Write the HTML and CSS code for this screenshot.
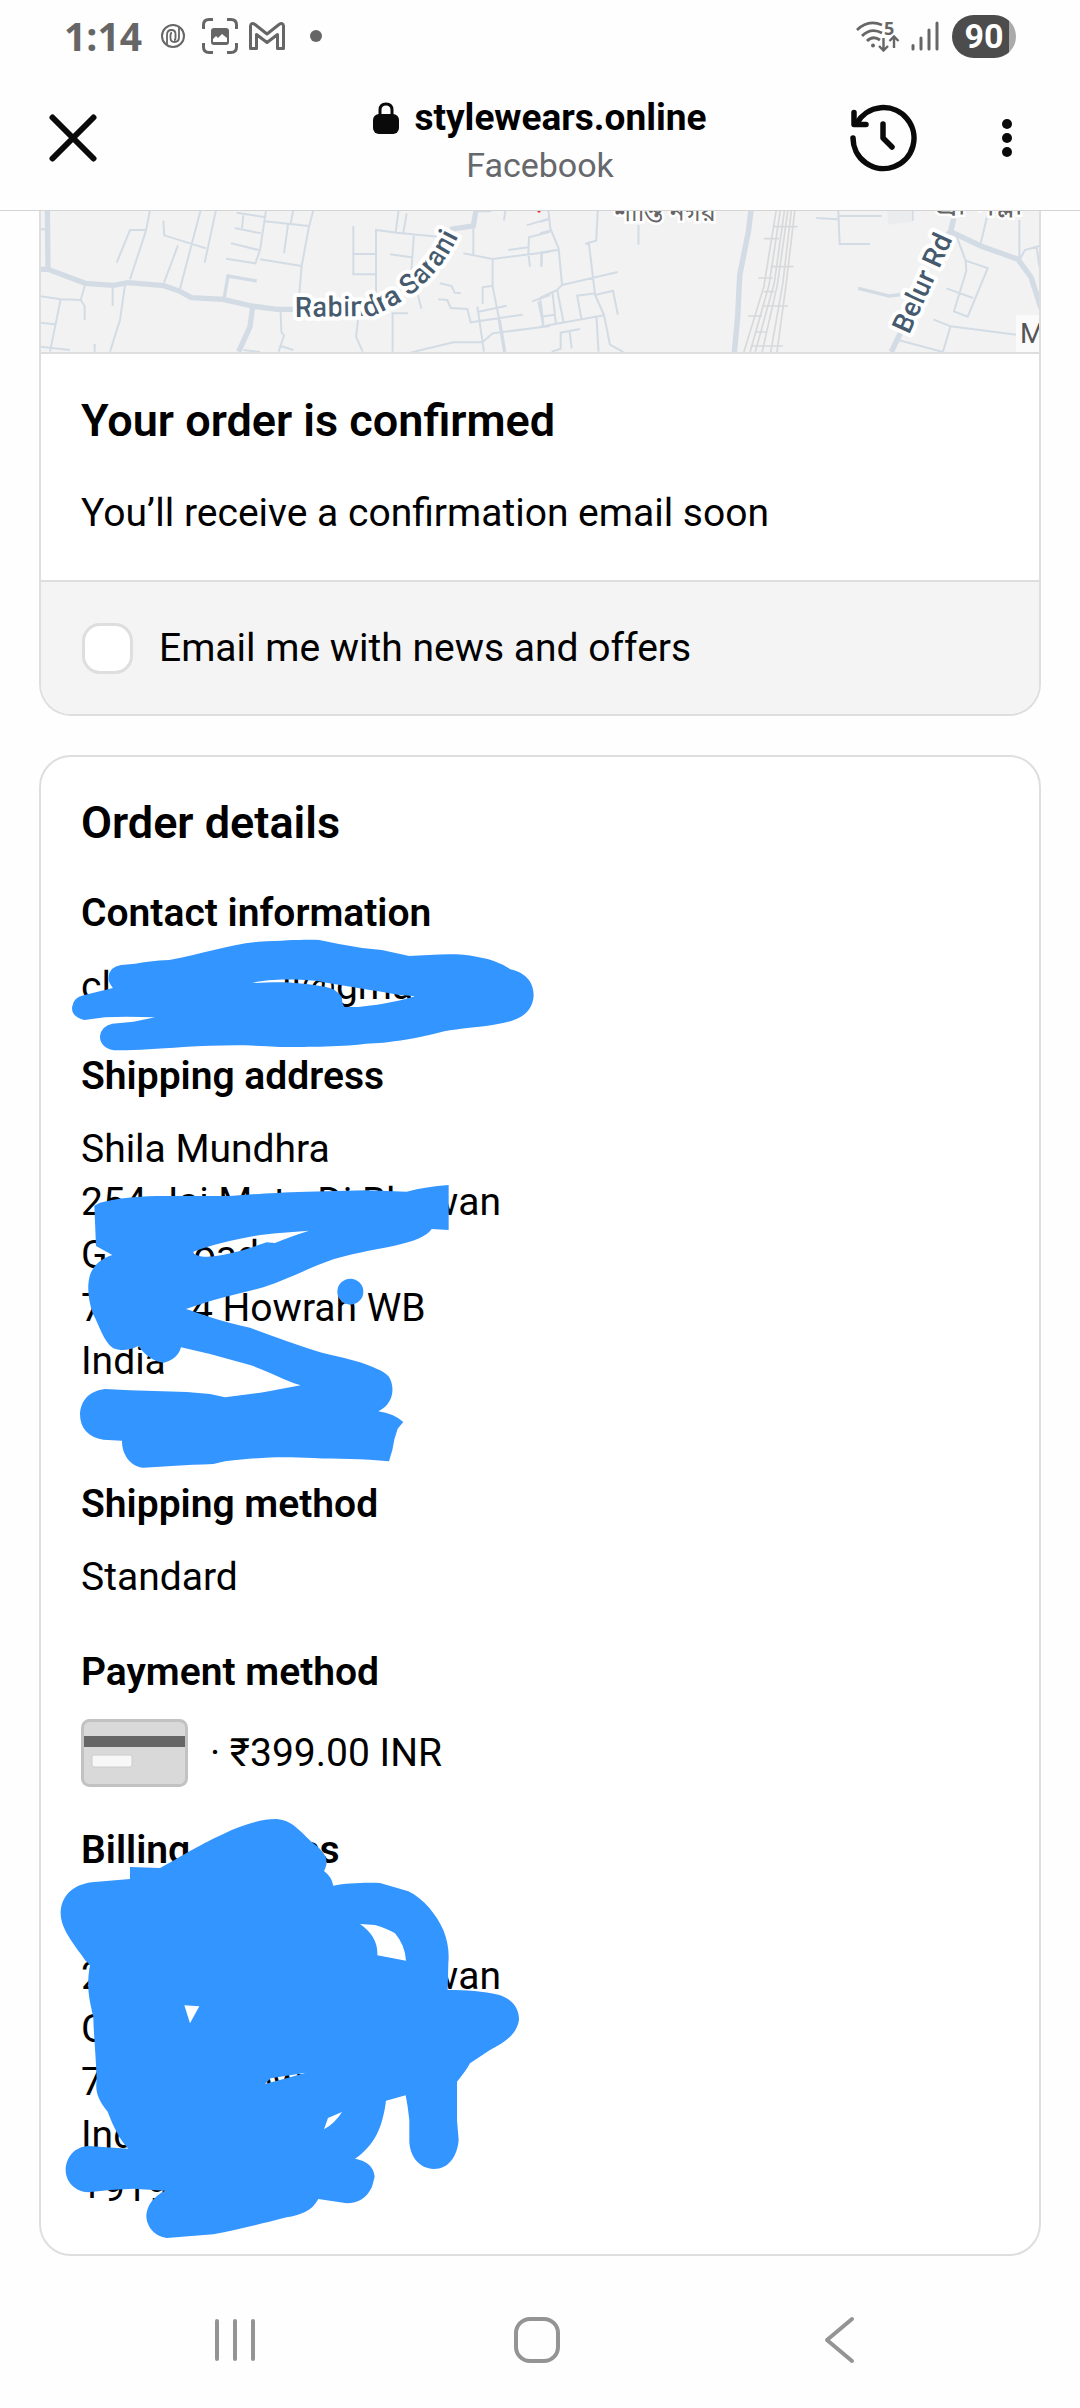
FILE: index.html
```html
<!DOCTYPE html>
<html lang="en">
<head>
<meta charset="utf-8">
<meta name="viewport" content="width=device-width, initial-scale=1">
<title>Order confirmed</title>
<link rel="stylesheet" href="styles.css">
</head>
<body>
<div class="status">
  <div class="status-left">
    <span class="clock">1:14</span>
    <svg class="swirl" width="24" height="24" viewBox="0 0 24 24" fill="none" stroke="#666" stroke-width="2"><circle cx="12" cy="12" r="11"/><path d="M6 20V11Q6 6 10.500 6Q14.500 6 14.500 10V14Q14.500 16 13 16M18 4V13Q18 18 13.500 18Q9.500 18 9.500 14V10.500Q9.500 9 11 9" stroke-width="1.800"/></svg>
    <svg class="shot" width="36" height="36" viewBox="0 0 36 36" fill="none" stroke="#666" stroke-width="3"><path d="M1.500 11V7Q1.500 1.500 7 1.500H11M25 1.500H29Q34.500 1.500 34.500 7V11M34.500 25V29Q34.500 34.500 29 34.500H25M11 34.500H7Q1.500 34.500 1.500 29V25"/><rect x="9" y="10" width="18" height="17" rx="3" fill="#666" stroke="none"/><path d="M11 24V21L14 18L16 20L20 16L25 20V24Z" fill="#fff" stroke="none"/></svg>
    <svg class="mail" width="36" height="28" viewBox="0 0 36 28" fill="none" stroke="#666" stroke-width="3" stroke-linejoin="round"><path d="M1.500 26.500V4Q2 0 6 2.500L18 12L30 2.500Q34 0 34.500 4V26.500H28.500V12.500L18 20.500L7.500 12.500V26.500Z"/></svg>
    <svg width="12" height="12" viewBox="0 0 12 12"><circle cx="6" cy="6" r="6" fill="#666"/></svg>
  </div>
  <div class="status-right">
    <svg width="44" height="32" viewBox="0 0 44 32" fill="none" stroke="#666" stroke-width="2.800"><path d="M1 10Q12-1 26 5M6 16Q15 7 26 13M11 21Q17 15 24 20"/><circle cx="17" cy="25.500" r="2" fill="#666" stroke="none"/><path d="M27.500 18V30M23 26L27.500 30.500L32 26M38 28V17M33.500 21L38 16.500L42.500 21" stroke-width="2.400"/><text x="28" y="15" class="wifi-number">5</text></svg>
    <svg width="28" height="30" viewBox="0 0 28 30" stroke="#666" stroke-width="3" stroke-linecap="round"><path d="M2 24.500V28"/><path d="M10 17V28"/><path d="M18 9V28"/><path d="M26 2V28"/></svg>
    <span class="battery">90</span>
  </div>
</div>

<header class="browser-bar">
  <button class="icon-button close" aria-label="Close"><svg width="48" height="48" viewBox="0 0 48 48" stroke="#0a0a0a" stroke-width="6" stroke-linecap="round"><path d="M3.500 3.500L44.500 44.500M44.500 3.500L3.500 44.500"/></svg></button>
  <div class="site">
    <div class="site-name"><svg width="26" height="32" viewBox="0 0 26 32"><path d="M7 14V8Q7 2 13 2Q19 2 19 8V14" fill="none" stroke="#0a0a0a" stroke-width="3"/><rect y="12" width="26" height="20" rx="6" fill="#0a0a0a"/></svg>stylewears.online</div>
    <div class="site-source">Facebook</div>
  </div>
  <div class="bar-actions">
    <button class="icon-button" aria-label="History"><svg width="68" height="68" viewBox="0 0 68 68" fill="none" stroke="#0a0a0a" stroke-width="5.500" stroke-linecap="round" stroke-linejoin="round"><path d="M4 34A30.500 30.500 0 1 0 8 19"/><path d="M5 8.500V20.500H17" /><path d="M5 20.500L13 12" stroke-width="4"/><path d="M34 20V34L43 43"/></svg></button>
    <button class="icon-button" aria-label="More options"><svg width="12" height="40" viewBox="0 0 12 40" fill="#0a0a0a"><circle cx="6" cy="6" r="5"/><circle cx="6" cy="20" r="5"/><circle cx="6" cy="34" r="5"/></svg></button>
  </div>
</header>

<main class="content">
  <section class="card confirmation">
    <svg class="map" viewBox="41 211 998 141" preserveAspectRatio="xMidYMid slice" role="img" aria-label="Delivery map">
      <rect x="-1000" width="4000" height="600" fill="#f2f2f2"/>
      <g transform="translate(30 200) scale(.33333)" class="road">
        <path d="M30 88H48M360 30L348 92L300 238M348 90H300L260 188M400 62L403 106L528 145M512 30L450 266M558 30L524 188M444 136L402 248M620 38L702 51M708 30L703 65L690 150L676 190L588 176M640 46L636 84M614 84L692 100M603 130L686 150M705 64L836 78M790 30L782 70M774 74L762 160M690 178L815 198M850 30L836 85L815 198L808 280M970 78V223H1036M970 162H1036M1038 280V90L1100 98L1225 110M1106 30L1097 96M1130 40L1120 98M1152 100L1142 245M1080 163L1145 172M1330 80V164M1300 160L1388 177L1560 155M1388 177V260L1408 360L1424 455M1358 312V262L1388 257M1490 76L1560 55M1426 30L1422 62M1434 150L1495 142M1560 95L1497 112L1495 160L1500 200M1536 160L1534 200M1198 152L1196 184H1208M1230 250L1265 258L1274 278L1292 280M1225 298L1252 300L1262 324L1312 327L1322 367L1478 344M1342 336L1430 317M1342 320L1362 455M1140 458L1270 427L1358 426L1388 400L1560 378M1506 304L1560 285M1525 305L1540 378M1088 455V340H1134M984 360L978 410L998 455M1160 270L1174 326M752 335L754 396L762 406L746 455M752 438L790 450M640 450L690 456M248 264V318M285 255L270 360L240 455M194 432V455M30 288L92 298L152 300L164 258M92 298L60 455M152 300L164 318V360M30 368L74 373M30 440L120 450"/>
        <path class="wide" d="M52 20L54 208M30 208H54L166 250L250 256L294 248L402 257L450 274L484 293L580 298L665 318L740 328H810M668 320L660 380L626 455M1340 20L1330 78L1260 88"/>
        <path class="mid" d="M582 296L594 228L680 243M1340 32H1384M1408 360L1424 455"/>
        <circle cx="1527" cy="33" r="5" fill="#e33" stroke="none"/>
      </g>
      <g transform="translate(540 200) scale(.34439 .33333)" class="road">
        <path d="M24 30L30 85L54 145L64 255L50 270L0 294M0 65L25 58M0 100L30 92M0 158L54 149M4 155V200M168 30L163 122L132 131H142L160 285L186 345L203 434L242 456M64 255L226 216M160 285L212 272L226 344M162 280L108 287L120 355M0 380L186 346M164 350L170 455M0 294L10 370M36 275L46 370M50 270L68 365M4 350L42 344M34 455L60 446V398L116 387M86 395L92 445M286 75V134M802 54L864 58M866 30L870 132H958M866 48H992M1298 50L1280 128M1392 60V180L1408 150L1450 138M1442 140L1450 200M1210 110L1236 182L1238 212L1202 334L1242 350L1300 204L1236 182M1180 265L1258 294M1142 358L1192 379L1384 404M1192 379L1170 455M1040 420L1170 456"/>
        <path class="wide" d="M614 20L605 95L580 225L574 350L564 460M1020 456L1060 370M1205 40L1192 95L1160 130M1192 95L1280 138L1388 178L1426 232L1455 325"/>
        <path class="mid" d="M924 265L1015 288L1060 282M1080 30V62"/>
        <path class="rail" d="M686 30L650 260L592 456M698 30L665 255L610 456M710 30L680 250L625 456M720 30L690 250L645 456M730 30L705 250L670 456M740 30L715 250L688 456M678 80H748M650 116H694M670 200H736M634 234H676M650 275H680M650 318H720M604 348H645M624 396H656M612 438H706"/>
        <path d="M1008 30L1012 74L1080 65V30Z" fill="#eaecee" stroke="none"/>
      </g>
      <path id="rabindra" d="M295 317L372 316Q440 290 467 216" fill="none"/>
      <path id="belur" d="M909 335L957 230" fill="none"/>
      <text class="street"><textPath href="#rabindra">Rabindra Sarani</textPath></text>
      <text class="street"><textPath href="#belur">Belur Rd</textPath></text>
      <text class="locality" x="614" y="221">শান্তি নগর</text>
      <text class="locality locality-large" x="936" y="215">শ্রী পল্লী</text>
      <path d="M1016 315H1039V352H1016Z" fill="#fafafa"/>
      <text class="place" x="1020" y="343">M</text>
    </svg>
    <div class="message">
      <h1>Your order is confirmed</h1>
      <p>You’ll receive a confirmation email soon</p>
    </div>
    <label class="offers" for="offers"><input type="checkbox" id="offers">Email me with news and offers</label>
  </section>

  <section class="card details">
    <h1>Order details</h1>
    <div class="group">
      <h2>Contact information</h2>
      <p>cl<span class="gap gap-email"></span>ll@gma</p>
    </div>
    <div class="group">
      <h2>Shipping address</h2>
      <address>Shila Mundhra<br>254 Jai Mata Di Bhawan<br>G<span class="gap gap-road"></span>oad<br>7<span class="gap gap-code"></span>4 Howrah WB<br>India<br>&nbsp;</address>
    </div>
    <div class="group method">
      <h2>Shipping method</h2>
      <p>Standard</p>
    </div>
    <div class="group">
      <h2>Payment method</h2>
      <div class="payment">
        <svg width="107" height="68" viewBox="0 0 107 68"><rect x="1.500" y="1.500" width="104" height="65" rx="7" fill="#d9d9d9" stroke="#c2c2c2" stroke-width="3"/><path fill="#666" d="M3 17H104V28H3Z"/><rect x="11" y="36" width="40" height="12" rx="2" fill="#f7f7f7" stroke="#ccc"/></svg>
        <span>· ₹399.00 INR</span>
      </div>
    </div>
    <div class="group">
      <h2>Billing address</h2>
      <address>&nbsp;<br>254 Jai Mata Di Bhawan<br>G<br>7<span class="gap gap-code"></span>4 Howrah WB<br>India<br>+919</address>
    </div>
    <svg class="marker" width="500" height="1496" viewBox="41 757 500 1496" fill="#3395ff" fill-rule="evenodd" aria-hidden="true">
      <path transform="translate(30 740) scale(.35714 .33333)" d="M220 712Q222 680 255 675L295 671Q330 663 390 660C480 642 560 612 640 605C720 602 760 598 810 600L865 612L930 624L985 630L1062 648C1120 646 1190 636 1250 650Q1310 660 1345 688C1395 700 1412 735 1410 770C1405 820 1370 842 1310 852C1260 862 1200 865 1160 874C1100 890 1060 900 990 908L940 911C860 922 760 920 700 921C600 913 520 916 430 921C350 927 290 932 235 931C205 925 195 905 196 888Q200 858 230 851L290 845L350 832L270 830L210 832L152 840C125 832 116 818 118 800Q122 772 150 766L232 744Q218 725 220 712ZM622 729C660 718 720 716 800 722C880 738 960 750 1030 764L1078 769C1020 788 960 797 920 801L880 801Q872 788 874 772C862 755 850 745 825 740C770 730 720 725 680 727Z"/>
      <g transform="translate(50 1060) scale(.33333)">
        <path d="M133 437L150 428C200 415 250 410 320 408L540 408C600 404 660 398 770 395L950 391L1070 395C1110 385 1150 378 1196 375V510L1145 507C1130 530 1090 545 1030 558C960 572 900 582 850 598C780 622 720 655 640 682C560 702 480 720 408 747C450 760 510 785 600 803L665 827C720 845 790 875 880 893C940 907 1000 930 1015 948C1035 975 1035 1030 985 1054Q1030 1060 1060 1086L1043 1106Q1032 1135 1027 1170L1017 1204C940 1195 860 1198 790 1194C700 1190 640 1190 525 1204L490 1212C400 1215 350 1220 280 1223C240 1220 215 1180 216 1142L160 1139C115 1132 90 1105 90 1062C92 1020 120 992 165 987L240 991L410 996L480 1002L525 1012C580 1005 640 998 680 989L752 976C700 960 660 935 600 915L480 882L393 862C388 885 365 905 340 908C310 905 285 885 265 858C240 870 215 875 190 865C160 845 150 800 128 760C115 720 110 680 120 645C130 615 155 595 187 585L138 558ZM430 575C500 550 600 525 690 519L777 512Q720 530 675 549L650 547C600 565 520 590 470 590C450 590 430 585 430 575Z"/>
        <circle cx="901" cy="695" r="39"/>
      </g>
      <path transform="translate(50 1790) scale(.33333)" d="M240 231L330 234C380 208 440 168 520 132C580 102 640 86 680 87C730 92 750 125 790 160C830 190 838 215 822 243Q845 260 850 287C890 279 950 277 990 279L1075 304C1120 325 1160 375 1180 420Q1200 470 1195 520L1193 600C1250 600 1300 604 1345 614C1385 625 1408 655 1407 690C1400 735 1360 760 1320 780L1260 820Q1250 840 1221 875V990L1226 1050C1222 1100 1195 1137 1152 1137C1108 1135 1080 1100 1078 1055V990L1073 950L1067 916L1008 932C998 1010 975 1065 915 1106C950 1112 972 1130 974 1160L966 1190C950 1225 925 1238 890 1240L805 1227C785 1265 750 1275 710 1282C620 1305 560 1320 490 1333L350 1344C315 1340 288 1310 289 1275C292 1245 310 1220 345 1202L250 1196L180 1200L115 1207C75 1205 47 1175 47 1140C48 1100 75 1070 115 1068L235 1076C210 1050 190 1010 173 965C140 925 136 900 140 870C138 800 130 720 130 680C118 630 108 590 120 525L105 510C70 460 30 415 32 365C35 320 65 285 125 277L240 267ZM930 402L975 405Q1010 415 1035 430Q1065 465 1068 512L982 496Q985 440 930 402ZM403 646L448 649L420 700ZM645 882L662 865L768 848L720 862ZM822 1018L834 984L876 966Q855 1000 822 1018Z"/>
    </svg>
  </section>
</main>

<nav class="system-nav" aria-label="System">
  <button class="icon-button" aria-label="Recent apps"><svg width="48" height="48" viewBox="0 0 48 48" stroke="#949494" stroke-width="4" stroke-linecap="round"><path d="M6 5V43M24 5V43M42 5V43"/></svg></button>
  <button class="icon-button" aria-label="Home"><svg width="48" height="48" viewBox="0 0 48 48" fill="none" stroke="#949494" stroke-width="4"><rect x="3" y="3" width="42" height="42" rx="14"/></svg></button>
  <button class="icon-button" aria-label="Back"><svg width="48" height="48" viewBox="0 0 48 48" fill="none" stroke="#949494" stroke-width="4" stroke-linecap="round" stroke-linejoin="round"><path d="M37 3L12 24L37 45"/></svg></button>
</nav>
</body>
</html>
```

FILE: styles.css
```css
* { box-sizing: border-box; }

body {
  margin: 0;
  background: #fefefe;
  color: #000;
  font: 39px/53px Roboto, "Noto Sans", sans-serif;
}

h1, h2, p, address { margin: 0; font-style: normal; }
h1 { font-size: 45px; line-height: 54px; font-weight: 600; }
h2 { font-size: 39px; line-height: 53px; font-weight: 600; }
svg { display: block; flex: none; }

.icon-button {
  display: block;
  padding: 0;
  border: 0;
  background: none;
}

/* Phone status bar */
.status {
  display: flex;
  justify-content: space-between;
  height: 66px;
  padding: 6px 64px 0;
  color: #666;
}
.status-left, .status-right { display: flex; align-items: center; }
.clock { font: 700 39px/60px "Open Sans", sans-serif; }
.swirl { margin-left: 19px; }
.shot { margin-left: 17px; }
.mail { margin: 0 25px 0 11px; }
.status-right { gap: 11px; }
.wifi-number { font: 700 18px "Open Sans", sans-serif; fill: #666; stroke: none; }
.battery {
  width: 64px;
  height: 43px;
  margin-left: 2px;
  border-radius: 22px;
  background: linear-gradient(90deg, #4c4c4c 57px, #aaa 57px);
  color: #fff;
  font: 700 34px/43px Roboto, sans-serif;
  text-align: center;
}

/* In-app browser bar */
.browser-bar {
  display: grid;
  grid-template-columns: 1fr auto 1fr;
  align-items: center;
  height: 145px;
  padding: 0 67px 0 49px;
  border-bottom: 1px solid #d4d4d4;
}
.close { justify-self: start; }
.site { padding: 8px 0 0 18px; text-align: center; }
.site-name {
  display: flex;
  align-items: center;
  justify-content: center;
  gap: 15px;
  font-size: 37px;
  line-height: 46px;
  font-weight: 700;
}
.site-source { font-size: 34px; line-height: 48px; color: #65686c; }
.bar-actions { display: flex; align-items: center; justify-content: flex-end; gap: 84px; }

/* Page content */
.content {
  display: flex;
  flex-direction: column;
  gap: 39px;
  padding: 0 39px 15px;
}
.card {
  border: 2px solid #dedede;
  border-radius: 32px;
  background: #fff;
}
.confirmation {
  border-top: 0;
  border-radius: 0 0 32px 32px;
  overflow: hidden;
}
.map { width: 100%; height: 141px; }
.road { fill: none; stroke: #d3dce5; stroke-width: 6; }
.wide { stroke-width: 16; }
.mid { stroke-width: 10; }
.rail { stroke: #d8d9db; stroke-width: 5; }
.street, .locality, .place { font-family: Roboto, "Noto Sans Bengali", "Noto Sans", sans-serif; }
.street {
  font-size: 28px;
  font-weight: 500;
  fill: #465a6e;
  stroke: #fff;
  stroke-width: 8px;
  stroke-linejoin: round;
  paint-order: stroke;
}
.locality { font-size: 25px; fill: #666; stroke: #fff; stroke-width: 5px; paint-order: stroke; }
.locality-large { font-size: 30px; }
.place { font-size: 28px; fill: #555; }
.message {
  display: flex;
  flex-direction: column;
  gap: 39px;
  padding: 40px;
  border: 2px solid #dedede;
  border-width: 2px 0;
}
.offers {
  display: flex;
  align-items: center;
  gap: 26px;
  padding: 40px 41px;
  background: #f4f4f4;
  line-height: 52px;
}
.offers input {
  appearance: none;
  width: 51px;
  height: 51px;
  margin: 0;
  border: 3px solid #dedede;
  border-radius: 18px;
  background: #fff;
}

.details {
  position: relative;
  display: flex;
  flex-direction: column;
  gap: 37px;
  padding: 39px 40px;
}
.group { display: flex; flex-direction: column; gap: 20px; }
.method { padding-bottom: 5px; }
.payment { display: flex; align-items: center; gap: 22px; }
.gap { display: inline-block; }
.gap-email { width: 171px; }
.gap-road { width: 86px; }
.gap-code { width: 88px; }
.marker { position: absolute; left: 0; top: 0; }

/* Android navigation */
.system-nav {
  display: flex;
  align-items: center;
  justify-content: center;
  gap: 254px;
  height: 138px;
  padding-right: 7px;
  background: #fefefe;
}
```
